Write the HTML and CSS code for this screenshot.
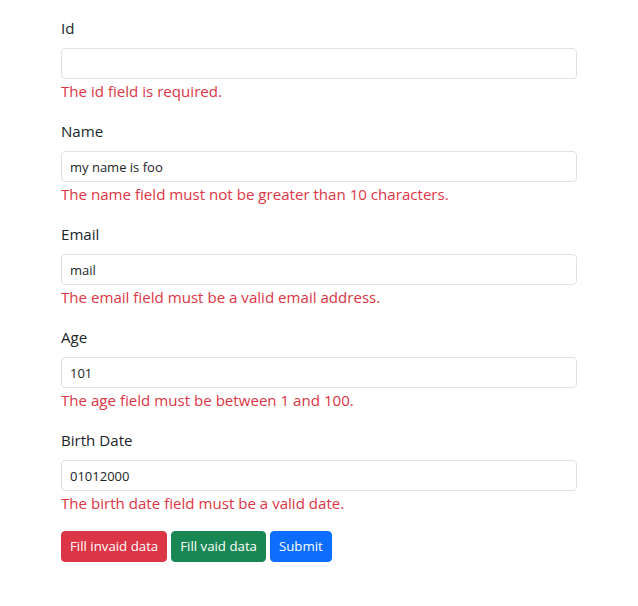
FILE: index.html
```html
<!DOCTYPE html>
<html>
<head>
<meta charset="utf-8">
<link rel="stylesheet" href="styles.css">
</head>
<body>
<div class="container">
  <form class="form">
    <div class="field">
      <label class="label">Id</label>
      <input class="input" type="text" value="">
      <div class="error">The id field is required.</div>
    </div>
    <div class="field">
      <label class="label">Name</label>
      <input class="input" type="text" value="my name is foo">
      <div class="error">The name field must not be greater than 10 characters.</div>
    </div>
    <div class="field">
      <label class="label">Email</label>
      <input class="input" type="text" value="mail">
      <div class="error">The email field must be a valid email address.</div>
    </div>
    <div class="field">
      <label class="label">Age</label>
      <input class="input" type="text" value="101">
      <div class="error">The age field must be between 1 and 100.</div>
    </div>
    <div class="field">
      <label class="label">Birth Date</label>
      <input class="input" type="text" value="01012000">
      <div class="error">The birth date field must be a valid date.</div>
    </div>
    <div class="actions">
      <button type="button" class="btn btn-danger">Fill invaid data</button>
      <button type="button" class="btn btn-success">Fill vaid data</button>
      <button type="button" class="btn btn-primary">Submit</button>
    </div>
  </form>
</div>
</body>
</html>
```
FILE: styles.css
```css
* { box-sizing: border-box; }
html, body { margin: 0; padding: 0; background: #fff; }
body {
  font-family: "Open Sans", "Noto Sans", sans-serif;
  font-size: 15.1px;
  line-height: 24px;
  color: #212529;
}
.container {
  width: 516px;
  margin: 0 auto;
  padding-top: 16px;
}
.field {
  display: flex;
  flex-direction: column;
  margin-bottom: 16px;
}
.label {
  display: block;
  margin-bottom: 8px;
  line-height: 24px;
}
.input {
  display: block;
  width: 100%;
  height: 31px;
  padding: 4px 8px;
  font-family: inherit;
  font-size: 13px;
  line-height: 21px;
  color: #212529;
  background: #fff;
  border: 1px solid #dee2e6;
  border-radius: 4px;
  outline: none;
}
.error {
  color: #dc3545;
  line-height: 24px;
}
.actions {
  display: flex;
  gap: 4px;
}
.btn {
  height: 31px;
  padding: 4px 8px;
  font-family: inherit;
  font-size: 13.25px;
  line-height: 21px;
  color: #fff;
  border: 1px solid transparent;
  border-radius: 4px;
  cursor: pointer;
}
.btn-danger { background: #dc3545; border-color: #dc3545; }
.btn-success { background: #198754; border-color: #198754; }
.btn-primary { background: #0d6efd; border-color: #0d6efd; }
```
